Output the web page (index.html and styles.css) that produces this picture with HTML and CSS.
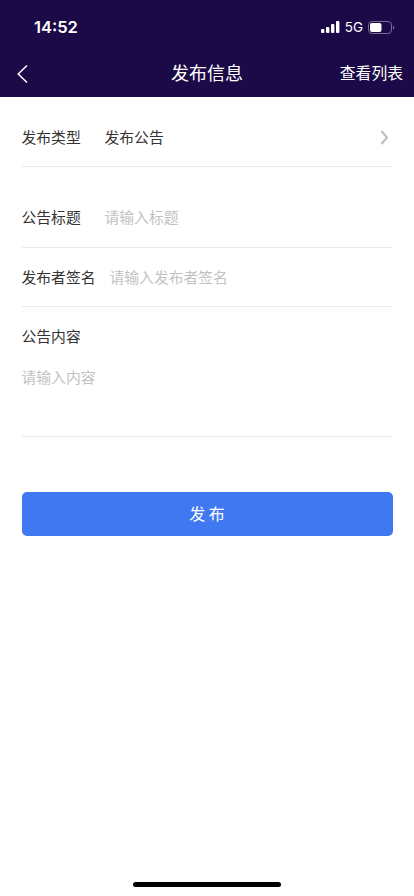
FILE: index.html
```html
<!DOCTYPE html>
<html lang="zh-CN">
<head>
<meta charset="utf-8">
<meta name="viewport" content="width=device-width, initial-scale=1">
<title>发布信息</title>
<link rel="stylesheet" href="styles.css">
</head>
<body>
<header class="header">
  <div class="status">
    <span class="time">14:52</span>
    <div class="indicators">
      <svg class="signal" width="19" height="12" viewBox="0 0 19 12" fill="#fff"><rect x="0" y="8" width="3.4" height="4" rx="1"/><rect x="5" y="6" width="3.4" height="6" rx="1"/><rect x="10" y="3" width="3.4" height="9" rx="1"/><rect x="15" y="0" width="3.4" height="12" rx="1"/></svg>
      <span class="network">5G</span>
      <svg class="battery" width="27" height="13" viewBox="0 0 27 13"><rect x=".5" y=".5" width="23" height="12" rx="3.5" fill="none" stroke="#776b91"/><rect x="2" y="2" width="11.500" height="9" rx="2" fill="#fff"/><path d="M25 4.500c1.800.6 1.800 3.400 0 4z" fill="#776b91"/></svg>
    </div>
  </div>
  <nav class="nav">
    <svg class="back" width="12" height="20" viewBox="0 0 12 20" fill="none" stroke="#fff" stroke-width="1.5"><path d="M10 1.500L1.200 10l8.800 8.500"/></svg>
    <h1 class="title">发布信息</h1>
    <a class="list-link">查看列表</a>
  </nav>
</header>
<main class="form">
  <div class="row type"><span class="label">发布类型</span><span class="value">发布公告</span>
    <svg class="chevron" width="9" height="15" viewBox="0 0 9 15" fill="none" stroke="#bdbdbd" stroke-width="2"><path d="M1.500 1l5.500 6.500L1.500 14"/></svg></div>
  <div class="row heading"><span class="label">公告标题</span><span class="placeholder">请输入标题</span></div>
  <div class="row author"><span class="label">发布者签名</span><span class="placeholder">请输入发布者签名</span></div>
  <div class="content"><span class="label">公告内容</span><span class="placeholder">请输入内容</span></div>
  <button class="submit">发 布</button>
</main>
<div class="home-indicator"></div>
</body>
</html>
```
FILE: styles.css
```css
* { box-sizing: border-box; }
body { margin: 0; height: 896px; display: flex; flex-direction: column; background: #fff; color: #333; font: 14.8px/22px "Noto Sans CJK SC", sans-serif; overflow: hidden; }
.header { height: 97px; background: #1c0947; color: #fff; }
.status { height: 50px; padding: 4px 19px 0 34px; display: flex; align-items: center; justify-content: space-between; }
.time { font: 600 16.500px/20px Inter, sans-serif; }
.indicators { display: flex; align-items: center; }
.network { margin: 0 5px; font: 13.500px/16px Inter, sans-serif; }
.nav { height: 47px; padding: 0 11px 0 17px; display: grid; grid-template-columns: 1fr auto 1fr; align-items: center; }
.title { margin: -3px 6px 0 0; font-size: 18px; line-height: 26px; font-weight: 400; }
.list-link { justify-self: end; margin-top: -2px; font-size: 15.800px; line-height: 24px; }
.form { flex: 1; padding: 11px 21.500px 0; display: flex; flex-direction: column; }
.row { display: flex; align-items: center; height: 60px; padding-bottom: 1px; border-bottom: 1px solid #ebebeb; }
.label { width: 83px; }
.row.type { height: 59px; padding-bottom: 0; }
.row.heading { margin-top: 21px; height: 59.500px; padding-bottom: 0; }
.row.author { height: 59.500px; padding-bottom: 0; }
.author .label { width: 88px; }
.chevron { margin-left: auto; margin-right: 4px; }
.placeholder { color: #c2c2c2; }
.content { height: 130px; padding-top: 18px; display: flex; flex-direction: column; gap: 18.500px; border-bottom: 1px solid #ebebeb; }
.submit { margin: 55px 0 0; padding: 0 0 3px; height: 44px; border: 0; border-radius: 5px; background: #4078f2; color: #fff; font: inherit; font-size: 16px; }
.home-indicator { width: 148px; height: 5px; margin: 0 auto 9px; border-radius: 3px; background: #000; }
```
